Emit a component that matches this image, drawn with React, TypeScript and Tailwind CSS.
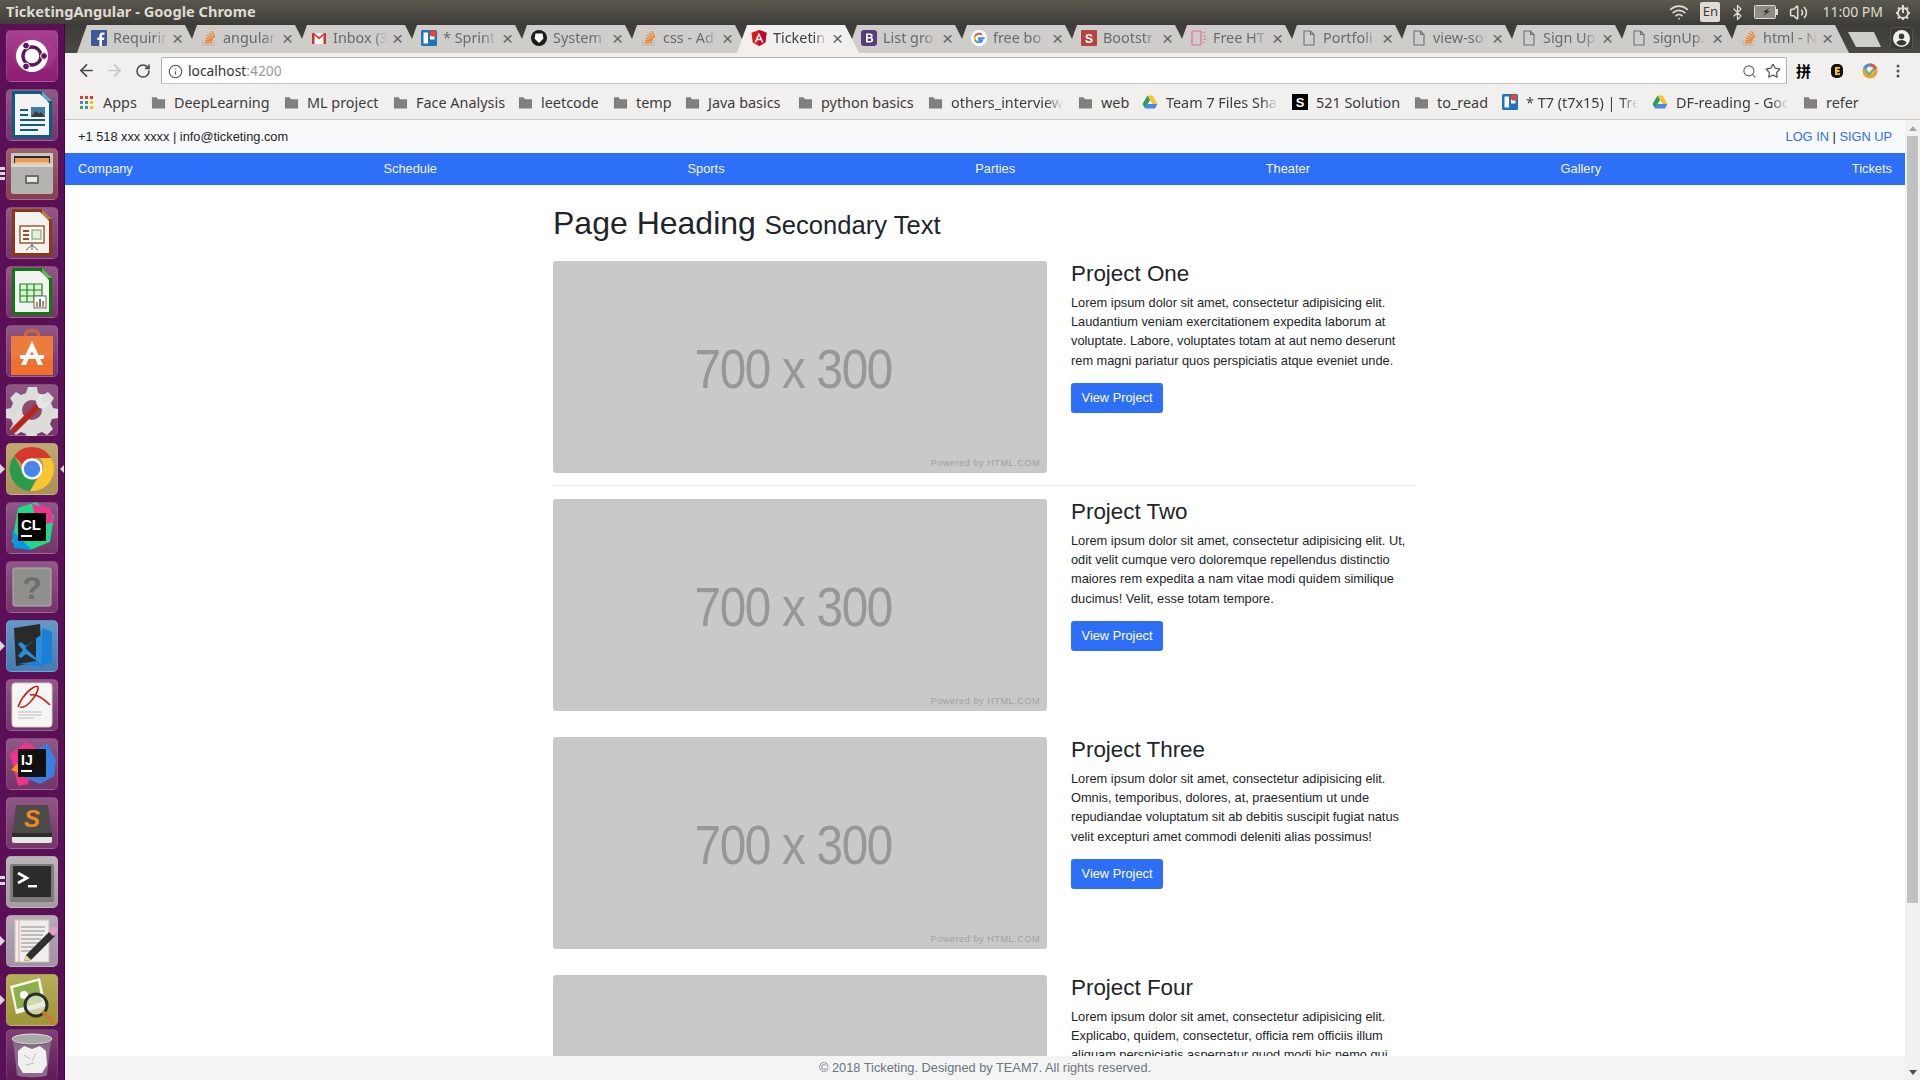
import React from 'react';
import { ArrowLeft, ArrowRight, RotateCw, Info, Search, Star, Wifi, Bluetooth, Volume2 } from 'lucide-react';

// --- launcher icons ---
const UbuntuIcon = () => (
  <svg viewBox="0 0 52 52" className="w-full h-full">
    <ellipse cx="29" cy="24" rx="21" ry="16" fill="#b0408f" opacity="0.5" />
    <circle cx="26" cy="26" r="16" fill="#fff" />
    <circle cx="26" cy="26" r="9" fill="none" stroke="#5c1a56" strokeWidth="3.4" />
    <circle cx="38" cy="26" r="3.4" fill="#5c1a56" stroke="#fff" strokeWidth="1" />
    <circle cx="20" cy="15.6" r="3.4" fill="#5c1a56" stroke="#fff" strokeWidth="1" />
    <circle cx="20" cy="36.4" r="3.4" fill="#5c1a56" stroke="#fff" strokeWidth="1" />
  </svg>
);

const DocBase = ({ edge, corner, children }: { edge: string; corner: string; children: React.ReactNode }) => (
  <svg viewBox="0 0 52 52" className="w-full h-full">
    <path d="M6 2h30l10 10v37H6z" fill={edge} />
    <path d="M36 2l10 10H36z" fill={corner} />
    <path d="M9 5h25l9 9v32H9z" fill="#f3f3f1" />
    {children}
  </svg>
);

const WriterIcon = () => (
  <DocBase edge="#0e5d80" corner="#5ba7cc">
    <path d="M14 20h8v2h-8zM14 25h8v2h-8zM14 30h25v2H14zM14 35h25v2H14zM14 40h18v2H14z" fill="#0e5d80" />
    <rect x="25" y="18" width="14" height="10" fill="#3d7ea6" />
    <path d="M25 28l5-6 3 3 2-2 4 5z" fill="#403a30" />
  </DocBase>
);

const ImpressIcon = () => (
  <DocBase edge="#8a3a10" corner="#c37b45">
    <rect x="14" y="19" width="24" height="17" fill="#fff" stroke="#a34a1c" strokeWidth="1.4" />
    <path d="M17 23h6v2h-6zM17 27h6v2h-6zM17 31h6v2h-6z" fill="#a34a1c" />
    <rect x="26" y="23" width="9" height="9" fill="#e6eee0" stroke="#6a9a50" />
    <path d="M26 43l0-7M26 38l-6 5M26 38l6 5" stroke="#666" strokeWidth="1" />
  </DocBase>
);

const CalcIcon = () => (
  <DocBase edge="#10780f" corner="#5cb85c">
    <path d="M14 18h22v18H14zM14 24h22M14 30h22M21 18v18M28 18v18" fill="#dff0d8" stroke="#188a18" strokeWidth="1.2" />
    <rect x="28" y="30" width="12" height="12" fill="#fff" stroke="#666" />
    <path d="M30 36h2v5h-2z" fill="#e67e22" />
    <path d="M33 33h2v8h-2z" fill="#3a7fc1" />
    <path d="M36 35h2v6h-2z" fill="#e67e22" />
  </DocBase>
);

const FilesIcon = () => (
  <svg viewBox="0 0 52 52" className="w-full h-full">
    <path d="M5 5h42v37H5z" fill="#c7c7c4" />
    <path d="M8 8h36v7H8z" fill="#2c2a28" />
    <path d="M9 10h34v4H9z" fill="#e89b5a" />
    <path d="M9 14h34l-1 5H10z" fill="#f1c28f" />
    <path d="M5 16h42v28a2 2 0 0 1-2 2H7a2 2 0 0 1-2-2z" fill="#b3b3b0" />
    <path d="M5 16h42v3H5z" fill="#d8d8d5" />
    <rect x="19" y="27" width="14" height="9" rx="1" fill="#6e6e6b" />
    <rect x="21" y="29" width="10" height="5" fill="#e8e8e5" />
  </svg>
);

const SoftwareIcon = () => (
  <svg viewBox="0 0 52 52" className="w-full h-full">
    <path d="M18 10c0-8 16-8 16 0v4h-3v-4c0-4-10-4-10 0v4h-3z" fill="#c96a3c" />
    <path d="M5 11h42v39H5z" fill="#ed7b3c" />
    <path d="M5 34h42v16H5z" fill="#ef6f2e" />
    <path d="M26 16l11 24h-5l-6-14-6 14h-5z" fill="#fff" />
    <rect x="14" y="30" width="24" height="4" rx="1" fill="#fff" />
  </svg>
);

const SettingsIcon = () => (
  <svg viewBox="0 0 52 52" className="w-full h-full">
    <path d="M22 3h9l1 6 5 2 5-3 6 6-3 5 2 5 5 1v9l-6 1-2 5 3 5-6 6-5-3-5 2-1 5h-9l-1-5-5-2-5 3-6-6 3-5-2-5-5-1v-9l5-1 2-5-3-5 6-6 5 3 5-2z" fill="#dcdcda" />
    <circle cx="26" cy="26" r="10" fill="#8c4a6c" />
    <path d="M8 46l26-26" stroke="#b5271c" strokeWidth="6" strokeLinecap="round" />
    <path d="M31 21c-3-6 2-12 9-11l-5 5 3 4 5-4c2 6-4 11-10 9z" fill="#e6e6e4" />
  </svg>
);

const ChromeIcon = () => (
  <svg viewBox="0 0 52 52" className="w-full h-full">
    <path d="M26 4a22 22 0 0 1 19 11H26a11 11 0 0 0-10 6L8 13A22 22 0 0 1 26 4z" fill="#d8372b" />
    <path d="M8 13l10 18a11 11 0 0 0 12 5l-6 12A22 22 0 0 1 8 13z" fill="#2c9a4b" />
    <path d="M45 15a22 22 0 0 1-21 33l11-18a11 11 0 0 0-1-15z" fill="#f8c630" />
    <circle cx="26" cy="26" r="10.5" fill="#fff" />
    <circle cx="26" cy="26" r="8.2" fill="#4a85ea" />
  </svg>
);

const ClionIcon = () => (
  <svg viewBox="0 0 52 52" className="w-full h-full">
    <path d="M12 6l18-6 18 14-4 26-20 8-18-8z" fill="#21d789" />
    <path d="M26 2l18 4 4 14-16 4z" fill="#ed358c" />
    <path d="M6 28l20 20-18-2z" fill="#009ae5" />
    <rect x="12" y="11" width="28" height="28" fill="#000" />
    <text x="15" y="28" fontFamily="Liberation Sans" fontWeight="700" fontSize="15" fill="#fff">CL</text>
    <rect x="15" y="33" width="11" height="2" fill="#fff" />
  </svg>
);

const UnknownIcon = () => (
  <svg viewBox="0 0 52 52" className="w-full h-full">
    <rect x="7" y="7" width="38" height="38" rx="2" fill="#8f8f8c" stroke="#b0b0ad" />
    <text x="26" y="38" textAnchor="middle" fontFamily="Liberation Sans" fontWeight="700" fontSize="32" fill="#6e6e6b">?</text>
  </svg>
);

const VscodeIcon = () => (
  <svg viewBox="0 0 52 52" className="w-full h-full">
    <path d="M8 8l26-4 2 38-26 4z" fill="#2b2b2b" />
    <path d="M36 8l10 4v30l-10 4-24-2 24-4z" fill="#1c7fd6" />
    <path d="M36 14l-16 12-5-4-3 2 5 6-5 6 3 2 5-4 16 10z" fill="#2a8ee0" />
    <path d="M30 18v20l-11-10z" fill="#2b2b2b" />
  </svg>
);

const EvinceIcon = () => (
  <svg viewBox="0 0 52 52" className="w-full h-full">
    <rect x="6" y="4" width="40" height="44" rx="3" fill="#f5f5f3" stroke="#cfcfcc" />
    <path d="M12 28C18 12 34 2 32 10S20 30 14 28M24 16c6-2 14 4 20 10" fill="none" stroke="#c5221f" strokeWidth="1.6" />
    <path d="M12 33h24M12 36h24M12 39h16" stroke="#bdbdba" />
  </svg>
);

const IntellijIcon = () => (
  <svg viewBox="0 0 52 52" className="w-full h-full">
    <path d="M4 16L20 4l10 6-8 36-10 2z" fill="#ed358c" />
    <path d="M5 32l8-8 4 12z" fill="#f7941d" />
    <path d="M28 12l14-6 8 16-2 16-14 8-14-6z" fill="#3a7fdd" />
    <rect x="12" y="11" width="28" height="28" fill="#111" />
    <text x="15" y="27" fontFamily="Liberation Sans" fontWeight="700" fontSize="14" fill="#fff">IJ</text>
    <rect x="15" y="32" width="11" height="2" fill="#fff" />
  </svg>
);

const SublimeIcon = () => (
  <svg viewBox="0 0 52 52" className="w-full h-full">
    <path d="M10 8h32l4 30H6z" fill="#4b4b49" />
    <path d="M6 38h40v6a2 2 0 0 1-2 2H8a2 2 0 0 1-2-2z" fill="#e6e6e3" />
    <path d="M6 36h40v4H6z" fill="#2d2d2b" />
    <text x="26" y="30" textAnchor="middle" fontFamily="Liberation Sans" fontWeight="700" fontStyle="italic" fontSize="24" fill="#f08a1d">S</text>
  </svg>
);

const TerminalIcon = () => (
  <svg viewBox="0 0 52 52" className="w-full h-full">
    <rect x="4" y="8" width="44" height="38" rx="2" fill="#7c7c79" />
    <rect x="7" y="10" width="38" height="31" fill="#2b2b2b" />
    <path d="M12 17l9 5-9 5" fill="none" stroke="#fff" strokeWidth="2.6" />
    <rect x="22" y="29" width="9" height="2.400" fill="#fff" />
  </svg>
);

const GeditIcon = () => (
  <svg viewBox="0 0 52 52" className="w-full h-full">
    <rect x="9" y="5" width="34" height="42" fill="#f0eeea" stroke="#c4c2be" />
    <path d="M13 5v42" stroke="#e89a9a" />
    <path d="M15 12h24M15 16h24M15 20h22M15 24h20M15 28h18M15 32h14M15 36h12" stroke="#8a8a88" />
    <path d="M20 40l24-24 5 5-24 24-7 1z" fill="#2f2f2d" />
    <path d="M42 16l3-3a3 3 0 0 1 5 5l-3 3z" fill="#e8a0c0" />
    <path d="M18 46l2-6 5 5z" fill="#e8d4a0" />
  </svg>
);

const ViewerIcon = () => (
  <svg viewBox="0 0 52 52" className="w-full h-full">
    <path d="M4 12l30-8 6 28-30 8z" fill="#f4f4f0" />
    <path d="M7 14l25-7 4 21-25 7z" fill="#8caf4a" />
    <circle cx="18" cy="21" r="4" fill="#fff" />
    <circle cx="30" cy="31" r="11" fill="#e4ead8" fillOpacity="0.7" stroke="#2f2f2d" strokeWidth="3" />
    <path d="M38 39l9 9" stroke="#c57a3a" strokeWidth="4" strokeLinecap="round" />
  </svg>
);

const TrashIcon = () => (
  <svg viewBox="0 0 52 52" className="w-full h-full">
    <ellipse cx="26" cy="10" rx="20" ry="5" fill="#a8a8a6" stroke="#ddd" />
    <path d="M7 11l4 35c1 3 29 3 30 0l4-35c-3 7-35 7-38 0z" fill="#8b6b8a" />
    <path d="M12 22l6-5 8 3 8-3 6 5 1 14-5 8H17l-5-8z" fill="#f0f0ee" />
    <path d="M18 26l6 4M30 24l-4 8M20 36l8-2" stroke="#bdbdbb" />
  </svg>
);

const launcherApps = [
  { Icon: UbuntuIcon, tile: 'bg-[#97217a]' },
  { Icon: WriterIcon, tile: 'bg-[#7d3a72]' },
  { Icon: FilesIcon, tile: 'bg-[#8c4456]', pips: 3 },
  { Icon: ImpressIcon, tile: 'bg-[#7d3a72]' },
  { Icon: CalcIcon, tile: 'bg-[#7d3a72]' },
  { Icon: SoftwareIcon, tile: 'bg-[#7d3a72]' },
  { Icon: SettingsIcon, tile: 'bg-[#7d3a72]' },
  { Icon: ChromeIcon, tile: 'bg-[#b49b5c]', pips: 1, focused: true },
  { Icon: ClionIcon, tile: 'bg-[#7d3a72]' },
  { Icon: UnknownIcon, tile: 'bg-[#7d3a72]' },
  { Icon: VscodeIcon, tile: 'bg-[#4a86bd]', pips: 1 },
  { Icon: EvinceIcon, tile: 'bg-[#7d3a72]' },
  { Icon: IntellijIcon, tile: 'bg-[#7d3a72]' },
  { Icon: SublimeIcon, tile: 'bg-[#7d3a72]' },
  { Icon: TerminalIcon, tile: 'bg-[#ada7ac]', pips: 2 },
  { Icon: GeditIcon, tile: 'bg-[#ab9cab]', pips: 1 },
  { Icon: ViewerIcon, tile: 'bg-[#a8a03c]', pips: 1 },
  { Icon: TrashIcon, tile: 'bg-[#66205f] mt-[-4px]' },
];

function Launcher() {
  return (
    <div className="w-[65px] shrink-0 bg-[#5b0f56] border-r border-[#3f0a3b] flex flex-col gap-[7px] pt-[6px] pl-[6px] overflow-hidden">
      {launcherApps.map(({ Icon, tile, pips, focused }, i) => (
        <div key={i} className={`relative w-[52px] h-[52px] shrink-0 rounded-[5px] ${tile}`}>
          <div className="absolute inset-0 rounded-[5px] border border-white/10 bg-linear-to-b from-white/15 to-black/5" />
          <div className="absolute inset-0">
            <Icon />
          </div>
          {pips === 1 && (
            <div className="absolute left-[-6px] top-[21px] border-y-[5px] border-y-transparent border-l-[5px] border-l-[#d9d9d9]" />
          )}
          {pips === 2 && (
            <div className="absolute left-[-6px] top-[20px] w-[5px] h-[9px] border-y-[3px] border-[#d9d9d9]" />
          )}
          {pips === 3 && (
            <div className="absolute left-[-6px] top-[19px] w-[5px] h-[13px] flex flex-col gap-[2px]">
              <div className="h-[3px] bg-[#d9d9d9]" />
              <div className="h-[3px] bg-[#d9d9d9]" />
              <div className="h-[3px] bg-[#d9d9d9]" />
            </div>
          )}
          {focused && (
            <div className="absolute right-[-7px] top-[21px] border-y-[5px] border-y-transparent border-r-[5px] border-r-[#d9d9d9]" />
          )}
        </div>
      ))}
    </div>
  );
}

// --- favicons ---
const FbFav = () => (
  <svg viewBox="0 0 16 16" className="w-4 h-4"><rect width="16" height="16" rx="1" fill="#3b5998" /><path d="M11 16v-6h2l.4-2.500H11V6c0-.8.3-1.200 1.200-1.200h1.300V2.600C13 2.500 12.300 2.500 11.600 2.500 9.600 2.500 8.400 3.700 8.400 5.700v1.800H6.300V10h2.100v6z" fill="#fff" /></svg>
);
const SoFav = () => (
  <svg viewBox="0 0 16 16" className="w-4 h-4"><path d="M2 10v5h11v-5" fill="none" stroke="#bcbbbb" strokeWidth="1.300" /><path d="M4 12.500h7M4.200 10.300l7 .6M4.800 8l6.800 1.800M6 5.500l6 3.300M8 3l5 5M10.500 1l3.500 6" stroke="#f48024" strokeWidth="1.300" /></svg>
);
const GmailFav = () => (
  <svg viewBox="0 0 16 16" className="w-4 h-4"><path d="M1 3h14v11H1z" fill="#f4f4f4" /><path d="M1 3h2.500v11H1zM12.500 3H15v11h-2.500z" fill="#c5392b" /><path d="M1 3h2l5 4 5-4h2L8 9.500z" fill="#d44638" /></svg>
);
const TrelloFav = () => (
  <svg viewBox="0 0 16 16" className="w-4 h-4"><rect width="16" height="16" rx="1.500" fill="#1f74bd" /><rect x="2.500" y="2.500" width="4.500" height="11" fill="#fff" /><rect x="9" y="2.500" width="4.500" height="7" fill="#fff" /><circle cx="12" cy="3.500" r="3.200" fill="#e8452c" /></svg>
);
const GithubFav = () => (
  <svg viewBox="0 0 16 16" className="w-4 h-4"><circle cx="8" cy="8" r="8" fill="#1b1b1b" /><path d="M4.500 3.500l7 0 1 5-4.500 4.500-4.500-4.500z" fill="#fff" /></svg>
);
const AngularFav = () => (
  <svg viewBox="0 0 16 16" className="w-4 h-4"><path d="M8 0l7.500 2.700-1.200 9.800L8 16l-6.300-3.500L.5 2.700z" fill="#dd1b16" /><path d="M8 0l7.500 2.700-1.200 9.800L8 16z" fill="#c3002f" /><path d="M8 2.500L3.500 12.500h1.700l.9-2.300h3.800l.9 2.300h1.700zM6.800 8.800L8 5.800l1.200 3z" fill="#fff" /></svg>
);
const BootstrapFav = () => (
  <svg viewBox="0 0 16 16" className="w-4 h-4"><rect width="16" height="16" rx="3" fill="#563d7c" /><path d="M5 3.500h4c1.700 0 2.700.8 2.700 2.200 0 .9-.5 1.600-1.300 1.900 1.100.2 1.800 1 1.800 2.200 0 1.700-1.200 2.700-3.100 2.700H5zm1.800 1.400v2.200h1.800c.9 0 1.300-.4 1.300-1.100s-.4-1.100-1.300-1.100zm0 3.500v2.700h2c1 0 1.500-.5 1.500-1.300s-.5-1.400-1.600-1.400z" fill="#fff" /></svg>
);
const GoogleFav = () => (
  <svg viewBox="0 0 16 16" className="w-4 h-4"><circle cx="8" cy="8" r="8" fill="#fff" /><path d="M13.700 8.100H8v2h3.300c-.4 1.400-1.700 2.300-3.300 2.300" fill="none" stroke="#4285f4" strokeWidth="1.800" /><path d="M8 12.400a4.400 4.400 0 0 1-4.100-2.900" fill="none" stroke="#34a853" strokeWidth="1.800" /><path d="M3.900 9.500a4.400 4.400 0 0 1 0-3" fill="none" stroke="#fbbc05" strokeWidth="1.800" /><path d="M3.900 6.500A4.400 4.400 0 0 1 11 4.900" fill="none" stroke="#ea4335" strokeWidth="1.800" /></svg>
);
const SnippFav = () => (
  <svg viewBox="0 0 16 16" className="w-4 h-4"><rect width="16" height="16" rx="1" fill="#b5443f" /><text x="8" y="12.500" textAnchor="middle" fontFamily="Liberation Sans" fontWeight="700" fontSize="12" fill="#fff">S</text></svg>
);
const FreeFav = () => (
  <svg viewBox="0 0 16 16" className="w-4 h-4"><rect x="1" y="1" width="9" height="14" rx="1" fill="none" stroke="#e46a9b" strokeWidth="1.200" /><path d="M12 3l2-1M12.500 6H15M12.500 9H15M12 12l2 1" stroke="#e46a9b" /></svg>
);
const PageFav = () => (
  <svg viewBox="0 0 16 16" className="w-4 h-4"><path d="M3 1h6.500L13 4.500V15H3z" fill="none" stroke="#6f6f6f" strokeWidth="1.100" /><path d="M9.500 1v3.500H13" fill="none" stroke="#6f6f6f" strokeWidth="1.100" /></svg>
);
const FolderFav = () => (
  <svg viewBox="0 0 16 16" className="w-[15px] h-[15px]"><path d="M1 2.500h5l1.500 2H15v10H1z" fill="#808080" /></svg>
);
const DriveFav = () => (
  <svg viewBox="0 0 16 16" className="w-4 h-4"><path d="M5.500 1.500h5L15.500 10h-5z" fill="#f7c325" /><path d="M5.500 1.500L.5 10 3 14.500 8 6z" fill="#2aa15a" /><path d="M3 14.500h10l2.500-4.500h-10z" fill="#4a86e8" /></svg>
);
const SolutionFav = () => (
  <svg viewBox="0 0 16 16" className="w-4 h-4"><rect width="16" height="16" fill="#000" /><text x="8" y="13" textAnchor="middle" fontFamily="Liberation Sans" fontWeight="700" fontSize="13" fill="#fff">S</text></svg>
);
const AppsFav = () => (
  <div className="grid grid-cols-3 gap-[2px] w-[13px] h-[13px]">
    {['bg-[#e5392f]', 'bg-[#e5392f]', 'bg-[#e5392f]', 'bg-[#3c8dde]', 'bg-[#33a853]', 'bg-[#fbbc05]', 'bg-[#33a853]', 'bg-[#3c8dde]', 'bg-[#fbbc05]'].map((c, i) => (
      <div key={i} className={`w-[3px] h-[3px] ${c}`} />
    ))}
  </div>
);

// --- chrome tabs ---
const tabs = [
  { title: 'Requiring', Icon: FbFav },
  { title: 'angular', Icon: SoFav },
  { title: 'Inbox (3', Icon: GmailFav },
  { title: '* Sprint', Icon: TrelloFav },
  { title: 'System', Icon: GithubFav },
  { title: 'css - Ad', Icon: SoFav },
  { title: 'Ticketing', Icon: AngularFav, active: true },
  { title: 'List gro', Icon: BootstrapFav },
  { title: 'free bo', Icon: GoogleFav },
  { title: 'Bootstr', Icon: SnippFav },
  { title: 'Free HT', Icon: FreeFav },
  { title: 'Portfoli', Icon: PageFav },
  { title: 'view-so', Icon: PageFav },
  { title: 'Sign Up', Icon: PageFav },
  { title: 'signUp.', Icon: PageFav },
  { title: 'html - N', Icon: SoFav },
];

function TabStrip() {
  return (
    <div className="h-[29px] shrink-0 bg-linear-to-b from-[#3c3b37] to-[#4a4944] flex items-end pl-[12px] relative">
      {tabs.map(({ title, Icon, active }) => (
        <div
          key={title}
          className={`relative h-[28px] w-[122px] mr-[-12px] shrink-0 flex items-center pl-[14px] pb-[2px] [clip-path:polygon(10px_0,108px_0,122px_100%,0_100%)] ${
            active ? 'bg-[#f1f0ee] z-10 text-[#3c3c3c]' : 'bg-[#cfcdca] text-[#6a6a6a]'
          }`}
        >
          <Icon />
          <span className="ml-[6px] w-[54px] overflow-hidden whitespace-nowrap text-[14.4px] font-['Noto_Sans',sans-serif] [mask-image:linear-gradient(to_right,#000_75%,transparent)]">
            {title}
          </span>
          <span className="ml-[5px] text-[19px] leading-none font-['Liberation_Sans',sans-serif] font-light text-[#666]">×</span>
        </div>
      ))}
      {/* new tab button */}
      <div className="absolute left-[1783px] top-[8px] w-[33px] h-[15px] bg-[#cfcdca] [clip-path:polygon(0_0,26px_0,33px_100%,8px_100%)]" />
      {/* profile */}
      <div className="absolute left-[1825px] top-[3px] w-[23px] h-[23px] rounded-[4px] bg-[#3a3935] border border-[#55544e] flex items-center justify-center">
        <svg viewBox="0 0 16 16" className="w-[17px] h-[17px]">
          <circle cx="8" cy="8" r="8" fill="#f1f0ee" />
          <circle cx="8" cy="6" r="2.600" fill="#3a3935" />
          <path d="M3.200 12.200C4 10.200 6 9.500 8 9.500s4 .7 4.800 2.700A6 6 0 0 1 3.200 12.200z" fill="#3a3935" />
        </svg>
      </div>
    </div>
  );
}

function Toolbar() {
  return (
    <div className="h-[31px] shrink-0 bg-[#f1f0ee] flex items-start pt-[4px] pl-[11px] pr-[8px]">
      <div className="w-[85px] h-[27px] flex items-center text-[#4a4a4a] gap-[9px] pl-[1px]">
        <ArrowLeft size={19} strokeWidth={2.2} />
        <ArrowRight size={19} strokeWidth={2.2} className="text-[#c6c6c6] mr-[2px]" />
        <RotateCw size={16} strokeWidth={2.4} />
      </div>
      <div className="w-[1626px] h-[27px] bg-white border border-[#b3b2af] rounded-t-[2px] border-b-[#c5c4c1] flex items-center pl-[6px] pr-[5px] pt-[1px] text-[13.8px] font-['Noto_Sans',sans-serif]">
        <Info size={15} strokeWidth={1.8} className="text-[#555]" />
        <span className="ml-[5px] text-[#333]">localhost</span>
        <span className="text-[#9a9a9a]">:4200</span>
        <div className="flex-1" />
        <Search size={15} strokeWidth={1.8} className="text-[#666] mr-[8px]" />
        <Star size={16} strokeWidth={1.8} className="text-[#555]" />
      </div>
      <div className="flex-1 h-[27px] flex items-center justify-between pl-[9px] pr-[12px]">
        <span className="text-[15px] font-bold leading-none text-black font-['Noto_Sans_CJK_SC',sans-serif]">拼</span>
        <svg viewBox="0 0 16 16" className="w-4 h-4"><rect x="2" y="1" width="12" height="14" rx="5" fill="#111" /><path d="M6 4h5v1.800H8.200v1.300H10.500v1.800H8.200v1.300H11V12H6z" fill="#f5c518" /></svg>
        <svg viewBox="0 0 16 16" className="w-4 h-4"><circle cx="8" cy="8" r="7.500" fill="#e8a33a" /><path d="M8 .5a7.500 7.500 0 0 1 7 5L8 8z" fill="#d9534f" /><path d="M1 5.500A7.500 7.500 0 0 1 8 .5V8z" fill="#4a8fe0" /><circle cx="8" cy="7" r="3.500" fill="#f1f0ee" /><path d="M3 8l4 5 6-7-1.500-1L7 10 5 7z" fill="#58b368" /></svg>
        <svg viewBox="0 0 4 16" className="w-1 h-4"><circle cx="2" cy="3" r="1.500" fill="#555" /><circle cx="2" cy="8" r="1.500" fill="#555" /><circle cx="2" cy="13" r="1.500" fill="#555" /></svg>
      </div>
    </div>
  );
}

const bookmarks = [
  { label: 'Apps', Icon: AppsFav, w: 'w-[71px]', g: 'gap-[10px]' },
  { label: 'DeepLearning', Icon: FolderFav, w: 'w-[133px]' },
  { label: 'ML project', Icon: FolderFav, w: 'w-[109px]' },
  { label: 'Face Analysis', Icon: FolderFav, w: 'w-[125px]' },
  { label: 'leetcode', Icon: FolderFav, w: 'w-[95px]' },
  { label: 'temp', Icon: FolderFav, w: 'w-[72px]' },
  { label: 'Java basics', Icon: FolderFav, w: 'w-[113px]' },
  { label: 'python basics', Icon: FolderFav, w: 'w-[130px]' },
  { label: 'others_interview', Icon: FolderFav, w: 'w-[150px]', fade: true },
  { label: 'web', Icon: FolderFav, w: 'w-[64px]' },
  { label: 'Team 7 Files Share', Icon: DriveFav, w: 'w-[150px]', fade: true },
  { label: '521 Solution', Icon: SolutionFav, w: 'w-[122px]' },
  { label: 'to_read', Icon: FolderFav, w: 'w-[88px]' },
  { label: '* T7 (t7x15) | Trello', Icon: TrelloFav, w: 'w-[150px]', fade: true },
  { label: 'DF-reading - Google', Icon: DriveFav, w: 'w-[151px]', fade: true },
  { label: 'refer', Icon: FolderFav, w: 'w-[60px]' },
];

function BookmarksBar() {
  return (
    <div className="h-[36px] shrink-0 bg-[#f1f0ee] border-b border-[#c9c8c5] flex items-center pl-[15px] pt-[2px] text-[14.4px] text-[#3c3c3c] font-['Noto_Sans',sans-serif]">
      {bookmarks.map(({ label, Icon, w, g, fade }) => (
        <div key={label} className={`${w} shrink-0 flex items-center ${g ?? 'gap-[8px]'} whitespace-nowrap`}>
          <Icon />
          <span
            className={
              fade
                ? 'w-[112px] overflow-hidden [mask-image:linear-gradient(to_right,#000_85%,transparent)]'
                : ''
            }
          >
            {label}
          </span>
        </div>
      ))}
    </div>
  );
}

// --- page ---
const projects = [
  {
    title: 'Project One',
    text: 'Lorem ipsum dolor sit amet, consectetur adipisicing elit. Laudantium veniam exercitationem expedita laborum at voluptate. Labore, voluptates totam at aut nemo deserunt rem magni pariatur quos perspiciatis atque eveniet unde.',
  },
  {
    title: 'Project Two',
    text: 'Lorem ipsum dolor sit amet, consectetur adipisicing elit. Ut, odit velit cumque vero doloremque repellendus distinctio maiores rem expedita a nam vitae modi quidem similique ducimus! Velit, esse totam tempore.',
  },
  {
    title: 'Project Three',
    text: 'Lorem ipsum dolor sit amet, consectetur adipisicing elit. Omnis, temporibus, dolores, at, praesentium ut unde repudiandae voluptatum sit ab debitis suscipit fugiat natus velit excepturi amet commodi deleniti alias possimus!',
  },
  {
    title: 'Project Four',
    text: 'Lorem ipsum dolor sit amet, consectetur adipisicing elit. Explicabo, quidem, consectetur, officia rem officiis illum aliquam perspiciatis aspernatur quod modi hic nemo qui soluta aut eius fugit quam in suscipit?',
  },
];

function ProjectRow({ title, text }: { title: string; text: string }) {
  return (
    <div className="flex gap-[24px]">
      <div className="relative w-[494px] h-[212px] shrink-0 bg-[#c9c9c9] rounded-[3px] flex items-center justify-center overflow-hidden">
        <span className="mr-[14px] mt-[4px] text-[56px] leading-none tracking-[-1.5px] text-[#979797] scale-x-[0.85]">700 x 300</span>
        <span className="absolute right-[7px] bottom-[5px] text-[9px] leading-none tracking-[0.6px] text-[#a0a0a0]">Powered by HTML.COM</span>
      </div>
      <div className="w-[346px]">
        <h3 className="text-[22.4px] leading-[26.9px] mb-[5px] text-[#212529]">{title}</h3>
        <p className="text-[12.8px] leading-[19.2px] mb-[12.8px] text-[#212529]">{text}</p>
        <button className="h-[30px] px-[10.6px] bg-[#2e6ff7] text-white text-[12.8px] rounded-[3px]">View Project</button>
      </div>
    </div>
  );
}

function Page() {
  return (
    <div className="flex-1 min-w-0 flex flex-col bg-white font-['Liberation_Sans',sans-serif]">
      <div className="h-[33px] shrink-0 bg-[#f8f9fa] flex items-center justify-between px-[13px] text-[12.8px] text-[#212529]">
        <span>+1 518 xxx xxxx | info@ticketing.com</span>
        <span>
          <a className="text-[#2e6ff7]">LOG IN</a> | <a className="text-[#2e6ff7]">SIGN UP</a>
        </span>
      </div>
      <nav className="h-[32px] shrink-0 bg-[#2e6ff7] flex items-center justify-between px-[13px] text-[12.8px] text-[#f4f4f4]">
        {['Company', 'Schedule', 'Sports', 'Parties', 'Theater', 'Gallery', 'Tickets'].map((n) => (
          <a key={n}>{n}</a>
        ))}
      </nav>
      <div className="flex-1 min-h-0 overflow-hidden pl-[488px] pt-[19px]">
        <h1 className="text-[32px] leading-[38.4px] mb-[16.6px] text-[#212529]">
          Page Heading <small className="text-[25.6px]">Secondary Text</small>
        </h1>
        <ProjectRow {...projects[0]} />
        <hr className="w-[862px] mt-[12px] mb-[13px] border-[#e9e9e9]" />
        <div className="flex flex-col gap-[26px]">
          {projects.slice(1).map((p) => (
            <ProjectRow key={p.title} {...p} />
          ))}
        </div>
      </div>
      <footer className="h-[24px] shrink-0 bg-[#f4f4f4] flex items-center justify-center text-[12.8px] text-[#6c757d]">
        © 2018 Ticketing. Designed by TEAM7. All rights reserved.
      </footer>
    </div>
  );
}

function Scrollbar() {
  return (
    <div className="w-[15px] shrink-0 bg-[#f1f1f1] flex flex-col items-center">
      <div className="h-[16px] shrink-0 flex items-center justify-center">
        <div className="border-x-[4px] border-x-transparent border-b-[5px] border-b-[#a3a3a3]" />
      </div>
      <div className="w-[11px] h-[767px] shrink-0 bg-[#c1c1c1]" />
      <div className="flex-1" />
      <div className="h-[16px] shrink-0 flex items-center justify-center">
        <div className="border-x-[4px] border-x-transparent border-t-[5px] border-t-[#505050]" />
      </div>
    </div>
  );
}

export default function App() {
  return (
    <div className="w-screen h-screen overflow-hidden flex flex-col">
      {/* Ubuntu top panel */}
      <div className="h-[24px] shrink-0 bg-linear-to-b from-[#5b594e] to-[#3e3d38] flex items-center pl-[6px] pr-[9px] text-[#dfdbd2] font-['Noto_Sans',sans-serif]">
        <span className="font-bold text-[14.6px] leading-none mt-[-2px]">TicketingAngular - Google Chrome</span>
        <div className="flex-1" />
        <Wifi size={20} strokeWidth={2} className="mr-[11px]" />
        <span className="w-[20px] h-[20px] bg-[#e0dcd4] text-[#3c3b37] rounded-[2px] text-[13px] flex items-center justify-center mr-[9px]">En</span>
        <Bluetooth size={17} strokeWidth={1.8} className="mr-[8px]" />
        <svg viewBox="0 0 24 14" className="w-[24px] h-[14px] mr-[11px]">
          <rect x="0.500" y="0.500" width="21" height="13" rx="1" fill="#8f8c82" stroke="#dfdbd2" />
          <rect x="22" y="4" width="2" height="6" fill="#dfdbd2" />
          <path d="M15 3l-6 4h3l-3 4 7-5h-3z" fill="#2f2e2a" />
        </svg>
        <Volume2 size={19} strokeWidth={2} className="mr-[14px]" />
        <span className="text-[14px] leading-none mr-[12px]">11:00 PM</span>
        {/* session gear */}
        <svg viewBox="0 0 16 16" className="w-4 h-4">
          <circle cx="8" cy="9" r="5" fill="none" stroke="#dfdbd2" strokeWidth="2" />
          <path d="M8 1v8" stroke="#dfdbd2" strokeWidth="2" />
          <path d="M3 3.500l1.500 1.500M13 3.500L11.500 5M1 9h1.500M13.500 9H15M3 14.500L4.500 13M13 14.500L11.500 13M8 14v2" stroke="#dfdbd2" strokeWidth="2" />
        </svg>
      </div>
      <div className="flex-1 min-h-0 flex">
        <Launcher />
        <div className="flex-1 min-w-0 flex flex-col">
          <TabStrip />
          <Toolbar />
          <BookmarksBar />
          <div className="flex-1 min-h-0 flex">
            <Page />
            <Scrollbar />
          </div>
        </div>
      </div>
    </div>
  );
}
